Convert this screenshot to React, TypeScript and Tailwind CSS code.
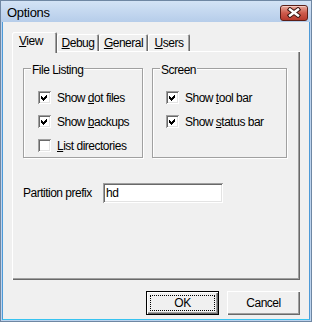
import React from "react";

// Classic Win32 "Options" property sheet inside a Vista Basic frame.
const raised = "shadow-[inset_1px_1px_#fff,inset_-1px_-1px_#696969,inset_-2px_-2px_#a0a0a0]";
const sunken = "shadow-[inset_1px_1px_#a0a0a0,inset_-1px_-1px_#fff,inset_2px_2px_#696969,inset_-2px_-2px_#e3e3e3]";
const etched = "border border-[#a0a0a0] shadow-[inset_1px_1px_#fff,1px_1px_#fff]";

function Check({ checked }: { checked: boolean }) {
  return (
    <span className={`flex h-[13px] w-[13px] shrink-0 items-center justify-center bg-white ${sunken}`}>
      {checked && (
        <svg width="7" height="7" viewBox="0 0 7 7" shapeRendering="crispEdges">
          <polygon points="0,2 2,4 6,0 6,3 2,7 0,5" fill="#000" />
        </svg>
      )}
    </span>
  );
}

function CheckRow({ checked, children }: { checked: boolean; children: React.ReactNode }) {
  return (
    <div className="flex h-[13px] items-center gap-[6px]">
      <Check checked={checked} />
      <span className="leading-[14px]">{children}</span>
    </div>
  );
}

function Group({ title, width, pad, children }: { title: string; width: string; pad: string; children: React.ReactNode }) {
  return (
    <div className={`flex h-[90px] flex-col ${width} ${etched}`}>
      <span className="-mt-[6px] ml-[7px] self-start bg-[#f0f0f0] px-px leading-[14px]">{title}</span>
      <div className={`mt-[14px] flex flex-col gap-[11px] ${pad}`}>{children}</div>
    </div>
  );
}

function Tab({ label, width, active }: { label: React.ReactNode; width: string; active?: boolean }) {
  if (active) {
    return (
      <div
        className={`-mb-[2px] flex h-[21px] ${width} items-start rounded-t-[2px] bg-[#f0f0f0] pl-[7px] pt-[2px] leading-[14px] shadow-[inset_1px_1px_#fff,inset_-1px_0_#696969,inset_-2px_0_#a0a0a0]`}
      >
        {label}
      </div>
    );
  }
  return (
    <div
      className={`flex h-[17px] ${width} items-start justify-center rounded-t-[2px] bg-[#f0f0f0] pt-[2px] leading-[14px] shadow-[inset_1px_1px_#fff,inset_-1px_0_#696969,inset_-2px_0_#a0a0a0]`}
    >
      {label}
    </div>
  );
}

function CloseButton() {
  return (
    <div className="flex h-[16px] w-[28px] items-center justify-center rounded-[3px] border border-[#5a1f18] bg-gradient-to-b from-[#e6a89c] via-[#cd5a4c] to-[#b8392c] shadow-[inset_0_1px_#f4c9c0]">
      <svg width="14" height="11" viewBox="0 0 14 11">
        <path d="M3 2.5 L11 8.5 M11 2.5 L3 8.5" stroke="#3a1410" strokeWidth="4.4" strokeLinecap="square" />
        <path d="M3 2.5 L11 8.5 M11 2.5 L3 8.5" stroke="#fff" strokeWidth="2.4" strokeLinecap="square" />
      </svg>
    </div>
  );
}

export default function App() {
  return (
    <div className="flex h-[322px] w-[312px] flex-col border border-[#6f87a3] bg-[#bcd3ee] font-['Liberation_Sans',Arial,sans-serif] text-[12px] tracking-[-0.5px] text-black">
      {/* title bar */}
      <div className="flex h-[21px] items-center justify-between bg-gradient-to-b from-[#d3e3f5] to-[#b6cdea] pl-[6px] pr-[3px] pt-[2px]">
        <span className="text-[13px] leading-[15px] tracking-[-0.3px]">Options</span>
        <CloseButton />
      </div>

      {/* client area */}
      <div className="mx-px mb-px flex flex-1 flex-col border-x border-b border-x-[#4c9ad8] border-b-[#38c3f0]">
        <div className="flex flex-1 flex-col bg-[#f0f0f0] px-[9px] pt-[10px]">
          <div className="relative z-10 flex h-[19px] items-end">
            <Tab active width="w-[45px]" label={<span><u>V</u>iew</span>} />
            <Tab width="w-[42px]" label={<span><u>D</u>ebug</span>} />
            <Tab width="w-[49px]" label={<span><u>G</u>eneral</span>} />
            <Tab width="w-[42px]" label={<span><u>U</u>sers</span>} />
          </div>

          <div className={`flex h-[229px] flex-col pl-[11px] pt-[17px] ${raised}`}>
            <div className="flex gap-[9px]">
              <Group title="File Listing" width="w-[120px]" pad="pl-[14px]">
                <CheckRow checked>Show <u>d</u>ot files</CheckRow>
                <CheckRow checked>Show <u>b</u>ackups</CheckRow>
                <CheckRow checked={false}><u>L</u>ist directories</CheckRow>
              </Group>
              <Group title="Screen" width="w-[135px]" pad="pl-[13px]">
                <CheckRow checked>Show <u>t</u>ool bar</CheckRow>
                <CheckRow checked>Show <u>s</u>tatus bar</CheckRow>
              </Group>
            </div>

            <div className="mt-[25px] flex h-[20px] items-center">
              <span className="w-[80px] leading-[14px]">Partition prefix</span>
              <div className={`flex h-[20px] w-[120px] items-center bg-white pl-[3px] ${sunken}`}>
                <span className="leading-[14px]">hd</span>
              </div>
            </div>
          </div>

          <div className="mt-[11px] flex justify-end gap-[8px]">
            <button className={`flex h-[24px] w-[73px] border border-black bg-[#f0f0f0] p-[3px] ${raised}`}>
              <span className="flex flex-1 items-center justify-center border border-dotted border-black leading-[14px]">
                OK
              </span>
            </button>
            <button className={`flex h-[24px] w-[73px] items-center justify-center bg-[#f0f0f0] leading-[14px] ${raised}`}>
              Cancel
            </button>
          </div>
        </div>
      </div>
    </div>
  );
}
